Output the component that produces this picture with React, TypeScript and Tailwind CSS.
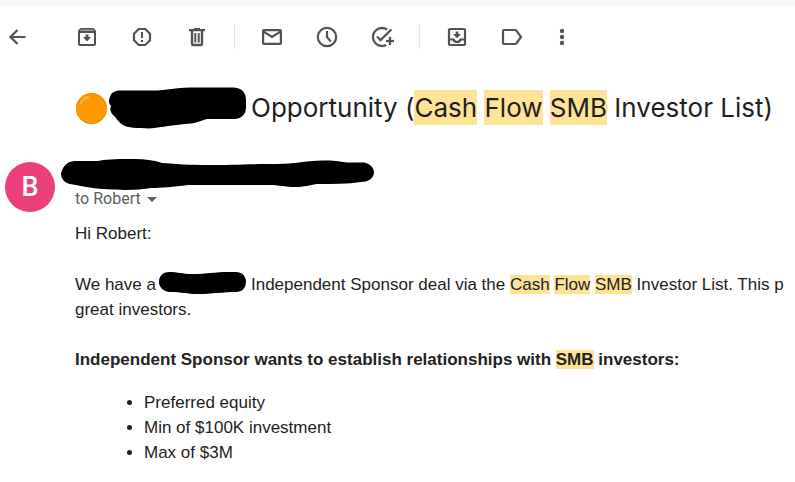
import type { ReactNode } from "react";

function Glyph({ children }: { children: ReactNode }) {
  return (
    <svg viewBox="0 0 24 24" className="size-6" fill="currentColor" aria-hidden="true">
      {children}
    </svg>
  );
}

function ToolButton({ label, width = "w-[55px]", children }: { label: string; width?: string; children: ReactNode }) {
  return (
    <button type="button" aria-label={label} className={`flex h-10 shrink-0 items-center justify-center ${width}`}>
      <Glyph>{children}</Glyph>
    </button>
  );
}

function Divider() {
  return (
    <div className="flex w-5 shrink-0 justify-center">
      <div className="h-[25px] w-px bg-[#e3e5e8]" />
    </div>
  );
}

function Toolbar() {
  return (
    <div className="flex h-[61px] items-center text-[#505352]">
      <ToolButton label="Back to inbox" width="w-[34px]">
        <path d="M20.500 12H6M12.500 5l-7 7 7 7" fill="none" stroke="currentColor" strokeWidth="2.200" />
      </ToolButton>
      <div className="flex items-center pl-[25px]">
        <ToolButton label="Archive">
          <path d="M20.54 5.23l-1.39-1.68C18.88 3.21 18.47 3 18 3H6c-.47 0-.88.21-1.16.55L3.46 5.23C3.17 5.57 3 6.02 3 6.5V19c0 1.1.9 2 2 2h14c1.1 0 2-.9 2-2V6.5c0-.48-.17-.93-.46-1.27zM5 19V8h14v11H5zm8.500-9.500h-3V12H8l4 4.500 4-4.500h-2.500z" />
          <path d="M6 4.500h12l1 1.500H5z" fill="#9a9c9b" />
        </ToolButton>
        <ToolButton label="Report spam">
          <path d="M8.700 4h6.600L20 8.700v6.600L15.300 20H8.700L4 15.300V8.700z" fill="none" stroke="currentColor" strokeWidth="2.200" />
          <path d="M11 7h2v6h-2zM11 15h2v2h-2z" />
        </ToolButton>
        <ToolButton label="Delete">
          <path d="M7 5v14c0 .6.4 1 1 1h8c.6 0 1-.4 1-1V5" fill="none" stroke="currentColor" strokeWidth="2.400" />
          <path d="M15 4V3H9v1H4v2.300h16V4zM9.300 8h2v9.500h-2zM12.700 8h2v9.500h-2z" />
        </ToolButton>
        <Divider />
        <ToolButton label="Mark as unread">
          <path d="M20 4H4c-1.1 0-2 .9-2 2v12c0 1.1.9 2 2 2h16c1.1 0 2-.9 2-2V6c0-1.1-.9-2-2-2zm-.8 2.200L12 10.600 4.800 6.200h14.400zM4.200 17.800V8.200l7.800 5 7.800-5v9.600H4.200z" />
        </ToolButton>
        <ToolButton label="Snooze">
          <circle cx="12" cy="12" r="9.200" fill="none" stroke="currentColor" strokeWidth="2.200" />
          <path d="M12 6v6.200l3.800 4.200" fill="none" stroke="currentColor" strokeWidth="2.200" />
        </ToolButton>
        <ToolButton label="Add to Tasks">
          <path
            d="M22 5.18L10.59 16.6l-4.24-4.24 1.41-1.41 2.83 2.83 10-10L22 5.18zM12 20c-4.41 0-8-3.59-8-8s3.59-8 8-8c1.57 0 3.04.46 4.28 1.25l1.45-1.45C16.1 2.67 14.13 2 12 2 6.48 2 2 6.48 2 12s4.48 10 10 10c1.73 0 3.36-.44 4.78-1.22l-1.5-1.5c-1 .46-2.11.72-3.28.72zm7-5h-3v2h3v3h2v-3h3v-2h-3v-3h-2v3z"
            stroke="currentColor"
            strokeWidth="0.3"
          />
        </ToolButton>
        <Divider />
        <ToolButton label="Move to">
          <rect x="4" y="4" width="16" height="16" rx="1" fill="none" stroke="currentColor" strokeWidth="2.200" />
          <path d="M4 14.500h4.500c.6 1.600 1.900 2.500 3.500 2.500s2.900-.9 3.500-2.500H20" fill="none" stroke="currentColor" strokeWidth="2.200" />
          <path d="M10.700 6.500h2.600V9H16l-4 4.200L8 9h2.700z" />
        </ToolButton>
        <ToolButton label="Labels">
          <path
            d="M4 5h11.200c.5 0 .9.2 1.200.6L21 12l-4.600 6.400c-.3.4-.7.6-1.200.6H4c-.6 0-1-.4-1-1V6c0-.6.4-1 1-1z"
            fill="none"
            stroke="currentColor"
            strokeWidth="2.200"
          />
        </ToolButton>
        <ToolButton label="More" width="w-[45px]">
          <circle cx="12" cy="6" r="2.200" />
          <circle cx="12" cy="12" r="2.200" />
          <circle cx="12" cy="18" r="2.200" />
        </ToolButton>
      </div>
    </div>
  );
}

function Hit({ children }: { children: ReactNode }) {
  return <mark className="bg-[#fee296] text-inherit">{children}</mark>;
}

function TitleHit({ children }: { children: ReactNode }) {
  return <mark className="inline-block bg-[#fee296] leading-[35px] text-inherit">{children}</mark>;
}

function Subject() {
  return (
    <div className="flex items-center whitespace-nowrap pl-[75px]">
      <svg viewBox="0 0 33 33" className="size-[33px] shrink-0" aria-hidden="true">
        <circle cx="16.500" cy="16.500" r="15.500" fill="#ff9800" />
        <circle cx="16.500" cy="16.500" r="15" fill="none" stroke="#f58c05" strokeWidth="1" />
        <path d="M6 11c1.500-3 4-5 7-6" fill="none" stroke="#ffb74d" strokeWidth="2" strokeLinecap="round" />
      </svg>
      <svg viewBox="0 0 139 42" className="h-[42px] w-[139px] shrink-0" aria-hidden="true">
        <path d="M11 3.500H50C64 2 75 0 92 .5H126C134 1 138 6 138 13V20C138 28 133 32 126 32H99C91 34 87 37 77 37C65 38 56 40 41 41.500C30 41 19 41 15 38C10 35 8 30 5 28C2 25 2 21 3 19C0 15 1 12 2 10C3 6 6 4 11 3.500Z" />
      </svg>
      <h1 className="pl-1 font-['Inter','Liberation_Sans',sans-serif] text-[26px] leading-[42px] text-[#1f1f1f]">
        Opportunity (<TitleHit>Cash</TitleHit> <TitleHit>Flow</TitleHit> <TitleHit>SMB</TitleHit> Investor List)
      </h1>
    </div>
  );
}

function Sender() {
  return (
    <div className="flex pt-[29px]">
      <div className="pl-[5px] pt-[4px]">
        <div className="flex size-[50px] items-center justify-center rounded-full bg-[#ec407a] font-['Roboto','Liberation_Sans',sans-serif] text-[27px] font-medium text-white">
          B
        </div>
      </div>
      <div className="pl-[6px] pt-px">
        <svg viewBox="0 0 313 32" className="h-8 w-[313px]" aria-hidden="true">
          <path d="M15 2H37C47 0 60 0 74 0C84 0 92 1 101 4C115 5 128 6 148 6C170 6 182 5 216 5C234 5 242 2 262 1.500C273 1 281 3 286 3.500H303C310 5 313 9 313 14C312 20 307 23 300 23C287 25 272 25 256 25C248 26 244 28 234 28C224 28 218 26 208 26H127C112 28 100 29 90 29C75 32 47 31 32 29C22 28 17 26 9 25C4 24 0 20 0 15C1 9 5 4 9 3C11 2 13 2 15 2Z" />
        </svg>
        <button
          type="button"
          className="ml-[14px] flex items-center gap-[6px] font-['Roboto','Liberation_Sans',sans-serif] text-[16px] leading-4 text-[#5e5e5e]"
        >
          to Robert
          <svg viewBox="0 0 10 5" className="h-[5px] w-[10px]" fill="currentColor" aria-hidden="true">
            <path d="M0 0h10L5 5z" />
          </svg>
        </button>
      </div>
    </div>
  );
}

function MessageBody() {
  return (
    <div className="pl-[75px] pt-[9px] font-['Liberation_Sans',Arial,sans-serif] text-[17px] leading-[25px] text-[#222222]">
      <p>Hi Robert:</p>
      <p className="whitespace-nowrap pt-[25px]">
        We have a
        <svg viewBox="0 0 88 24" className="ml-[2px] mr-[5px] inline-block h-6 w-[88px] align-[-5px]" aria-hidden="true">
          <path d="M11 1C20 1 24 3 34 3C50 3 55 1 72 1H78C84 1 88 5 88 11C88 17 84 21 78 21C65 21 55 23 39 23C29 23 25 21 11 21C5 20 1 16 1 11C1 5 5 1 11 1Z" />
        </svg>
        Independent Sponsor deal via the <Hit>Cash</Hit> <Hit>Flow</Hit> <Hit>SMB</Hit> Investor List. This p
        <br />
        great investors.
      </p>
      <p className="pt-[25px] font-bold">
        Independent Sponsor wants to establish relationships with <Hit>SMB</Hit> investors:
      </p>
      <ul className="list-disc pl-[69px] pt-[18px]">
        <li>Preferred equity</li>
        <li>Min of $100K investment</li>
        <li>Max of $3M</li>
      </ul>
    </div>
  );
}

export default function App() {
  return (
    <main className="min-h-screen overflow-hidden border-t-[6px] border-[#f6f8fc] bg-white">
      <Toolbar />
      <div className="pt-[20px]">
        <Subject />
        <Sender />
        <MessageBody />
      </div>
    </main>
  );
}
